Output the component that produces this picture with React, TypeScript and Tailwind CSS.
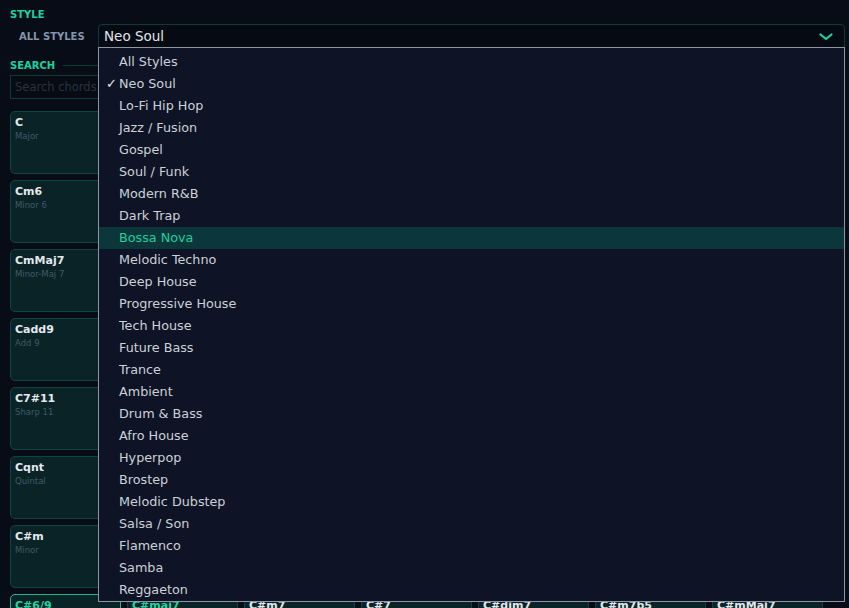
import React, { useState } from 'react';

type Chord = { name: string; quality: string; inStyle?: boolean; active?: boolean };

const STYLES = [
  'All Styles',
  'Neo Soul',
  'Lo-Fi Hip Hop',
  'Jazz / Fusion',
  'Gospel',
  'Soul / Funk',
  'Modern R&B',
  'Dark Trap',
  'Bossa Nova',
  'Melodic Techno',
  'Deep House',
  'Progressive House',
  'Tech House',
  'Future Bass',
  'Trance',
  'Ambient',
  'Drum & Bass',
  'Afro House',
  'Hyperpop',
  'Brostep',
  'Melodic Dubstep',
  'Salsa / Son',
  'Flamenco',
  'Samba',
  'Reggaeton',
];

const CHORDS: Chord[] = [
  { name: 'C', quality: 'Major' },
  { name: 'Cm', quality: 'Minor' },
  { name: 'C7', quality: 'Dominant 7' },
  { name: 'Cmaj7', quality: 'Major 7' },
  { name: 'Cm7', quality: 'Minor 7' },
  { name: 'Cdim', quality: 'Diminished' },
  { name: 'Caug', quality: 'Augmented' },
  { name: 'Cm6', quality: 'Minor 6' },
  { name: 'C6', quality: 'Major 6' },
  { name: 'Csus2', quality: 'Sus 2' },
  { name: 'Csus4', quality: 'Sus 4' },
  { name: 'Cdim7', quality: 'Dim 7' },
  { name: 'Cm7b5', quality: 'Half-Dim' },
  { name: 'C9', quality: 'Dominant 9' },
  { name: 'CmMaj7', quality: 'Minor-Maj 7' },
  { name: 'Cmaj9', quality: 'Major 9' },
  { name: 'Cm9', quality: 'Minor 9' },
  { name: 'C11', quality: 'Dominant 11' },
  { name: 'Cm11', quality: 'Minor 11' },
  { name: 'C13', quality: 'Dominant 13' },
  { name: 'Cmaj13', quality: 'Major 13' },
  { name: 'Cadd9', quality: 'Add 9' },
  { name: 'Cmadd9', quality: 'Minor Add 9' },
  { name: 'C7b9', quality: 'Flat 9' },
  { name: 'C7#9', quality: 'Sharp 9' },
  { name: 'C7b5', quality: 'Flat 5' },
  { name: 'C7#5', quality: 'Sharp 5' },
  { name: 'Cmaj7#11', quality: 'Lydian' },
  { name: 'C7#11', quality: 'Sharp 11' },
  { name: 'C7sus4', quality: '7 Sus 4' },
  { name: 'C6/9', quality: 'Six Nine' },
  { name: 'Cm6/9', quality: 'Minor 6/9' },
  { name: 'Cmaj7#5', quality: 'Maj 7 #5' },
  { name: 'C9sus4', quality: '9 Sus 4' },
  { name: 'C13b9', quality: '13 Flat 9' },
  { name: 'Cqnt', quality: 'Quintal' },
  { name: 'Cqrt', quality: 'Quartal' },
  { name: 'C5', quality: 'Power' },
  { name: 'Cmaj9#11', quality: 'Maj 9 #11' },
  { name: 'Cm13', quality: 'Minor 13' },
  { name: 'C7alt', quality: 'Altered' },
  { name: 'C#', quality: 'Major' },
  { name: 'C#m', quality: 'Minor' },
  { name: 'C#6', quality: 'Major 6' },
  { name: 'C#m6', quality: 'Minor 6' },
  { name: 'C#sus2', quality: 'Sus 2' },
  { name: 'C#sus4', quality: 'Sus 4' },
  { name: 'C#dim', quality: 'Diminished' },
  { name: 'C#aug', quality: 'Augmented' },
  { name: 'C#6/9', quality: 'Six Nine', inStyle: true, active: true },
  { name: 'C#maj7', quality: 'Major 7', inStyle: true },
  { name: 'C#m7', quality: 'Minor 7' },
  { name: 'C#7', quality: 'Dominant 7' },
  { name: 'C#dim7', quality: 'Dim 7' },
  { name: 'C#m7b5', quality: 'Half-Dim' },
  { name: 'C#mMaj7', quality: 'Minor-Maj 7' },
];

function ChordCard({ chord }: { chord: Chord }) {
  return (
    <div
      className={`h-[63px] rounded-[5px] border bg-[#0a2327] px-[4px] pt-[4px] ${
        chord.active ? 'border-[#17b98f]' : 'border-[#11443f]'
      }`}
    >
      <div
        className={`text-[11px] font-bold leading-[14px] ${
          chord.inStyle ? 'text-[#1fd6a3]' : 'text-[#e3e8ee]'
        }`}
      >
        {chord.name}
      </div>
      <div className="text-[8.5px] leading-[13px] text-[#3d5c66]">{chord.quality}</div>
    </div>
  );
}

export default function App() {
  const [style, setStyle] = useState('Neo Soul');
  const [hovered] = useState('Bossa Nova');

  return (
    <div
      className="h-[608px] w-full overflow-hidden bg-[#080c17] pl-[10px] pr-[4px] pt-[9px]"
      style={{ fontFamily: '"DejaVu Sans", Verdana, sans-serif' }}
    >
      <div className="text-[10px] font-bold leading-[11px] text-[#18d3a0]">STYLE</div>

      <div className="mt-[4px] flex items-center">
        <div className="w-[88px] pl-[9px] pt-[1px] text-[10px] font-bold text-[#8395ab]">ALL STYLES</div>
        <div className="relative flex-1">
          <div className="flex h-[24px] items-center justify-between rounded-t-[4px] border border-[#0f3a37] bg-[#060a13] pl-[5px] pr-[11px] pt-[1px]">
            <span className="text-[13.5px] text-[#e1e5eb]">{style}</span>
            <svg width="14" height="8" viewBox="0 0 14 8" fill="none">
              <path d="M1.5 1.5 L7 6 L12.5 1.5" stroke="#1bd3a1" strokeWidth="2.2" strokeLinecap="round" strokeLinejoin="round" />
            </svg>
          </div>

          <div className="absolute left-0 right-0 top-[23px] z-10 border border-[#8d97a4] bg-[#0e1425] pt-[3px]">
            {STYLES.map((s) => (
              <div
                key={s}
                onClick={() => setStyle(s)}
                className={`relative flex h-[22px] items-center pl-[20px] text-[12.75px] ${
                  s === hovered ? 'bg-[#0b373a] text-[#1fcf9f]' : 'text-[#ccd1d9]'
                }`}
              >
                {s === style && <span className="absolute left-[7px] text-[13px] text-[#e1e5eb]">✓</span>}
                {s}
              </div>
            ))}
          </div>
        </div>
      </div>

      <div className="mt-[10px] flex items-center gap-[8px]">
        <div className="text-[10px] font-bold text-[#18d3a0]">SEARCH</div>
        <div className="h-px flex-1 bg-[#0f3a37]" />
      </div>

      <input
        placeholder="Search chords"
        className="mt-[2px] h-[24px] w-[813px] border border-[#0f3a37] bg-[#070b14] px-[4px] text-[11.5px] text-[#e1e5eb] outline-none placeholder:text-[#29343f]"
      />

      <div className="mt-[12px] grid w-[813px] grid-cols-7 gap-[6px]">
        {CHORDS.map((c) => (
          <ChordCard key={c.name} chord={c} />
        ))}
      </div>
    </div>
  );
}
